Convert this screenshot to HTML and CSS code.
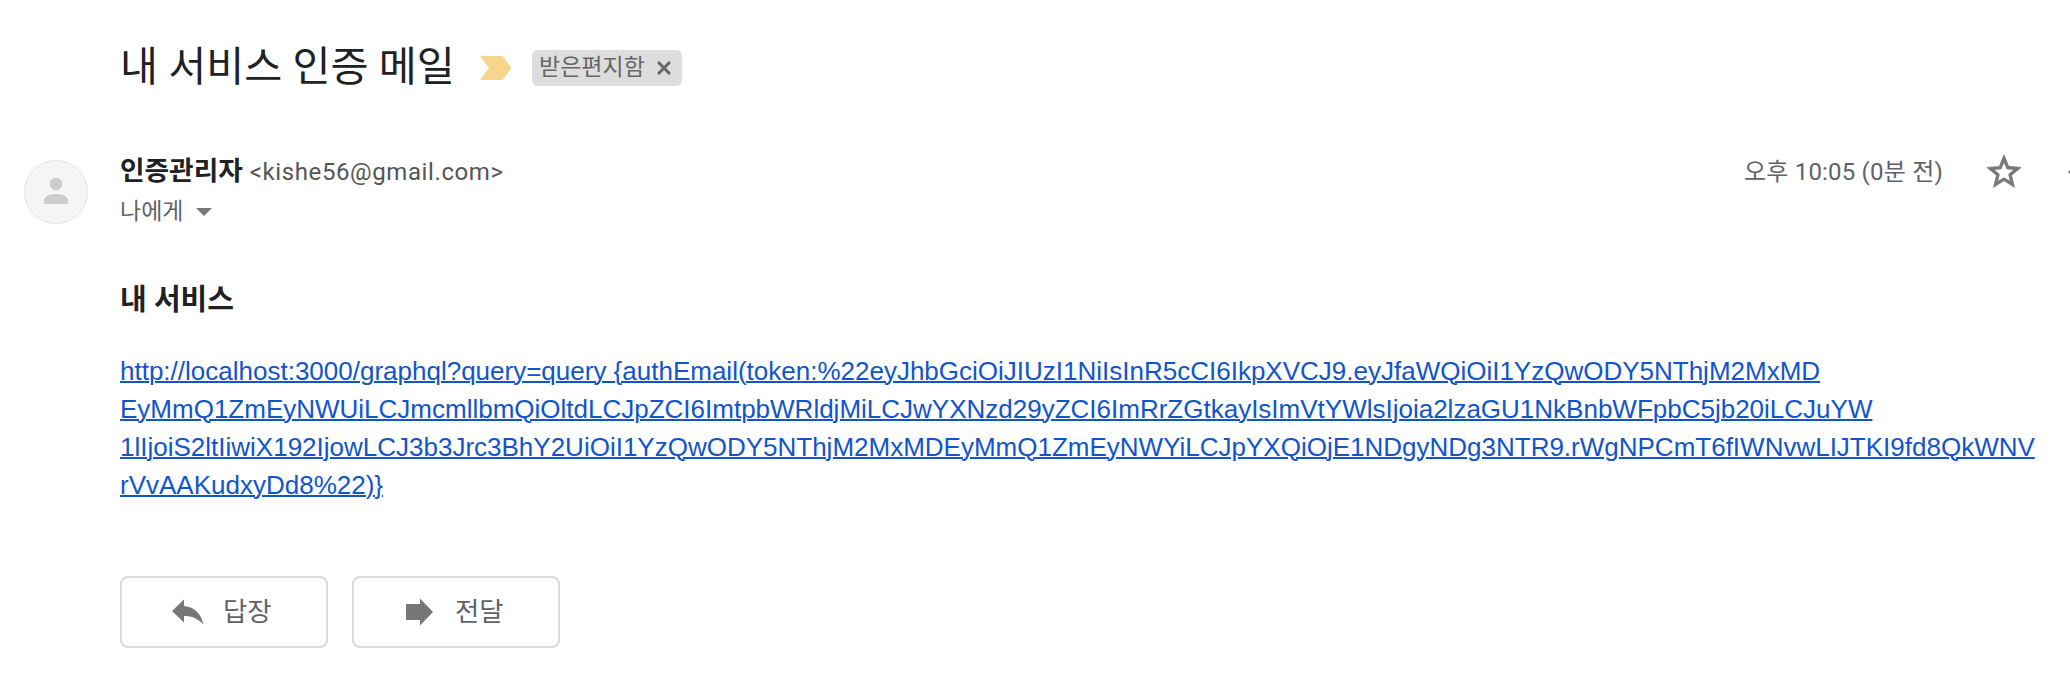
FILE: index.html
```html
<!DOCTYPE html>
<html lang="ko">
<head>
<meta charset="utf-8">
<title>내 서비스 인증 메일</title>
<link rel="stylesheet" href="styles.css">
</head>
<body>
<main class="mail">
  <header class="subject">
    <h1 class="subject-title">내 서비스 인증 메일</h1>
    <svg class="marker" width="32" height="24" viewBox="0 0 32 24"><path d="M0 0h22.500l9 12-9 12H0l9-12z" fill="#f8d58c"/></svg>
    <span class="chip"><span class="chip-text">받은편지함</span><svg class="chip-close" width="14" height="14" viewBox="0 0 14 14"><path d="M1 1l12 12M13 1l-12 12" stroke="#666" stroke-width="3"/></svg></span>
  </header>
  <section class="sender">
    <svg class="avatar" width="64" height="64" viewBox="0 0 64 64"><circle cx="32" cy="32" r="31.500" fill="#f5f5f5" stroke="#e3e3e3"/><circle cx="32" cy="24" r="6.200" fill="#ccc"/><path d="M20 44v-3.500c0-4.500 7-6.500 12-6.500s12 2 12 6.500V44z" fill="#ccc"/></svg>
    <div class="who">
      <div class="from"><span class="name">인증관리자</span><span class="email">&lt;kishe56@gmail.com&gt;</span></div>
      <div class="to"><span class="to-text">나에게</span><svg width="16" height="8" viewBox="0 0 16 8"><path d="M0 0h16l-8 8z" fill="#777"/></svg></div>
    </div>
    <div class="meta">
      <span class="time">오후 10:05 (0분 전)</span>
      <svg class="star" width="40" height="40" viewBox="0 0 24 24"><path fill="#777" stroke="#777" stroke-width="0.400" d="M22.300 9.240l-7.490-.620L12 1.700 9.190 8.630 1.700 9.240l5.760 4.730L5.720 21.200 12 17.270 18.280 21.200l-1.730-7.230L22.300 9.240zM12 15.400l-3.760 2.270 1-4.280-3.320-2.880 4.380-.380L12 6.100l1.710 4.040 4.380.380-3.320 2.880 1 4.280L12 15.400z"/></svg>
      <svg class="reply-edge" width="2" height="4" viewBox="0 0 2 4"><path d="M2 0v4L0 2z" fill="#777"/></svg>
    </div>
  </section>
  <article class="content">
    <h2 class="heading">내 서비스</h2>
    <a class="link" href="#">http://localhost:3000/graphql?query=query {authEmail(token:%22eyJhbGciOiJIUzI1NiIsInR5cCI6IkpXVCJ9.eyJfaWQiOiI1YzQwODY5NThjM2MxMD<br>EyMmQ1ZmEyNWUiLCJmcmllbmQiOltdLCJpZCI6ImtpbWRldjMiLCJwYXNzd29yZCI6ImRrZGtkayIsImVtYWlsIjoia2lzaGU1NkBnbWFpbC5jb20iLCJuYW<br>1lIjoiS2ltIiwiX192IjowLCJ3b3Jrc3BhY2UiOiI1YzQwODY5NThjM2MxMDEyMmQ1ZmEyNWYiLCJpYXQiOjE1NDgyNDg3NTR9.rWgNPCmT6fIWNvwLIJTKI9fd8QkWNV<br>rVvAAKudxyDd8%22)}</a>
  </article>
  <footer class="actions">
    <button class="action"><svg class="action-icon" width="32" height="28" viewBox="0 0 32 28"><path fill="#777" d="M0 13L12 1.500v6.500c11 1 17 8 19.500 18.500C26 20.500 20 18 12 18v6.500z"/></svg><span>답장</span></button>
    <button class="action"><svg class="action-icon" width="32" height="28" viewBox="0 0 32 28"><path fill="#777" d="M2 6h14V.5L29 14 16 27.500V22H2z"/></svg><span>전달</span></button>
  </footer>
</main>
</body>
</html>
```
FILE: styles.css
```css
* { box-sizing: border-box; }
body { margin: 0; background: #fff; color: #202124; font-family: Roboto, "Noto Sans CJK KR", sans-serif; overflow: hidden; }
.mail { width: 2070px; height: 678px; padding-top: 38px; }
.subject { display: flex; align-items: center; height: 60px; padding-left: 120px; }
.subject-title { margin: 0; width: 360px; font-size: 41.3px; font-weight: 400; line-height: 58px; padding-bottom: 2px; white-space: nowrap; }
.marker { display: block; }
.chip { display: flex; align-items: center; width: 150px; height: 36px; margin-left: 20px; padding-left: 7px; border-radius: 6px; background: #ddd; color: #666; font-size: 23px; line-height: 36px; }
.chip-text { width: 118px; white-space: nowrap; }
.sender { display: flex; height: 72px; margin-top: 54px; padding-left: 24px; }
.avatar { margin-top: 8px; }
.who { width: 600px; margin-left: 32px; }
.from { display: flex; align-items: baseline; gap: 7px; height: 40px; line-height: 39px; white-space: nowrap; }
.name { font-size: 26.7px; font-weight: 700; }
.email { color: #555; font-size: 24px; letter-spacing: 0.6px; }
.to { display: flex; align-items: center; gap: 13px; height: 36px; margin-top: 2px; line-height: 36px; color: #5f6368; font-size: 23px; }
.meta { display: flex; align-items: center; justify-content: flex-end; flex: 1; height: 40px; color: #5f6368; }
.time { padding-bottom: 6px; font-size: 24px; letter-spacing: 0.2px; white-space: nowrap; }
.star { margin-left: 41px; }
.reply-edge { margin-left: 44px; }
.content { padding-left: 120px; margin-top: 53px; }
.heading { margin: 0; height: 46px; font-size: 29px; font-weight: 700; line-height: 46px; }
.link { display: block; margin-top: 29px; font-family: "Liberation Sans", Arial, sans-serif; font-size: 26px; line-height: 38px; color: #15c; text-decoration: underline; text-decoration-thickness: 2px; white-space: nowrap; }
.actions { display: flex; gap: 24px; padding-left: 120px; margin-top: 72px; }
.action { display: flex; align-items: center; width: 208px; height: 72px; padding: 0 0 0 50px; border: 2px solid #dadce0; border-radius: 8px; background: #fff; color: #5f6368; font: 26.4px/36px Roboto, "Noto Sans CJK KR", sans-serif; }
.action-icon { margin-right: 19px; }
```
